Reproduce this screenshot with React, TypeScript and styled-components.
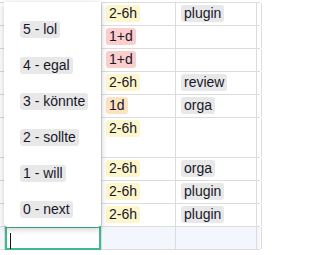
import React from 'react'
import styled, { createGlobalStyle } from 'styled-components'

const GlobalStyle = createGlobalStyle`
  body {
    margin: 0;
    background: #fff;
    font-family: 'Liberation Sans', Arial, sans-serif;
    font-size: 14px;
    color: #17172a;
  }
`

const EFFORT_COLORS: Record<string, string> = {
  '2-6h': '#fdf6cb',
  '1+d': '#fbcdcd',
  '1d': '#fde2c2',
}

const ROWS = [
  { effort: '2-6h', tag: 'plugin' },
  { effort: '1+d' },
  { effort: '1+d' },
  { effort: '2-6h', tag: 'review' },
  { effort: '1d', tag: 'orga' },
  { effort: '2-6h', tall: true },
  { effort: '2-6h', tag: 'orga' },
  { effort: '2-6h', tag: 'plugin' },
  { effort: '2-6h', tag: 'plugin' },
]

const OPTIONS = ['5 - lol', '4 - egal', '3 - könnte', '2 - sollte', '1 - will', '0 - next']

const Sheet = styled.div`
  position: relative;
  width: 260px;
  margin-top: 2px;
  border-top: 1px solid #dcdcdc;
`

const Row = styled.div<{ tall?: boolean; editing?: boolean }>`
  display: grid;
  grid-template-columns: 4px 98px 74px 81px 1fr;
  height: ${({ tall }) => (tall ? 40 : 23)}px;
  box-sizing: border-box;
  border-bottom: 1px solid #dcdcdc;
  background: ${({ editing }) => (editing ? '#f4f6fd' : '#fff')};
`

const Cell = styled.div<{ pad?: number }>`
  position: relative;
  box-sizing: border-box;
  border-right: 1px solid #dcdcdc;
  padding: 2px 0 0 ${({ pad }) => pad ?? 4}px;
  min-width: 0;
`

const Badge = styled.span<{ color?: string }>`
  display: inline-block;
  padding: 0 3px;
  height: 17px;
  line-height: 17px;
  border-radius: 3px;
  background: ${({ color }) => color || '#e8e8e8'};
  white-space: nowrap;
`

const Editor = styled.div`
  position: absolute;
  left: 1px;
  right: 0;
  top: -1px;
  bottom: -1px;
  box-sizing: border-box;
  border: 2px solid #3dbb8e;
  background: #fff;
  padding: 5px 0 0 3px;
`

const Caret = styled.span`
  display: block;
  width: 1px;
  height: 16px;
  background: #111;
`

const Dropdown = styled.ul`
  position: absolute;
  left: 4px;
  top: -1px;
  width: 97px;
  height: 225px;
  margin: 0;
  padding: 9px 0 0;
  list-style: none;
  box-sizing: border-box;
  background: #fff;
  border-radius: 0 0 4px 4px;
  box-shadow: 0 2px 7px rgba(0, 0, 0, 0.22);
  z-index: 2;
`

const Option = styled.li`
  display: flex;
  align-items: center;
  height: 36px;
  padding-left: 16px;
`

export default function App() {
  return (
    <>
      <GlobalStyle />
      <Sheet>
        {ROWS.map((row, idx) => (
          <Row key={idx} tall={row.tall}>
            <Cell />
            <Cell />
            <Cell>
              <Badge color={EFFORT_COLORS[row.effort]}>{row.effort}</Badge>
            </Cell>
            <Cell pad={5}>{row.tag && <Badge>{row.tag}</Badge>}</Cell>
            <Cell />
          </Row>
        ))}
        <Row editing>
          <Cell />
          <Cell>
            <Editor>
              <Caret />
            </Editor>
          </Cell>
          <Cell />
          <Cell />
          <Cell />
        </Row>
        <Dropdown>
          {OPTIONS.map((label) => (
            <Option key={label}>
              <Badge>{label}</Badge>
            </Option>
          ))}
        </Dropdown>
      </Sheet>
    </>
  )
}
